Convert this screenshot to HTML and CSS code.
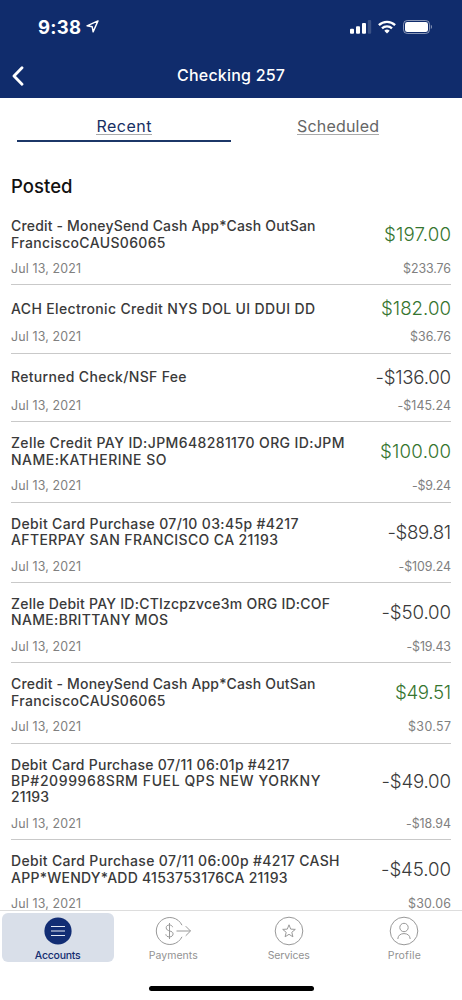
FILE: index.html
```html
<!DOCTYPE html>
<html lang="en">
<head>
<meta charset="utf-8">
<title>Checking 257</title>
<link rel="stylesheet" href="styles.css">
</head>
<body>
<div class="app">
  <header class="header">
    <div class="status">
      <div class="clock"><span data-w="43">9:38</span>
        <svg width="13" height="13" viewBox="0 0 13 13" fill="none" stroke="#fff" stroke-width="1.4" stroke-linejoin="round"><path d="M12 .9 1 5.800l5.200.9.900 5.200z"/></svg>
      </div>
      <div class="signals">
        <svg width="22" height="14" viewBox="0 0 22 14" fill="#fff"><rect x="0" y="8.800" width="4" height="5" rx="1"/><rect x="6" y="6.200" width="4" height="7.600" rx="1"/><rect x="12" y="3" width="4" height="10.800" rx="1"/><rect x="17.800" y="0" width="3.400" height="13.800" rx="1" opacity=".18"/></svg>
        <svg class="wifi" width="18" height="14" viewBox="0 0 18 14" fill="none" stroke="#fff" stroke-width="2.300"><path d="M.9 5.100a11.600 11.600 0 0 1 16.200 0M4 8.400a7.200 7.200 0 0 1 10 0"/><path d="m9 13.400-2.700-2.700a4 4 0 0 1 5.400 0z" fill="#fff" stroke="none"/></svg>
        <svg class="battery" width="29" height="14" viewBox="0 0 29 14"><rect x=".5" y=".5" width="26" height="13" rx="3.800" fill="none" stroke="#fff" stroke-opacity=".5"/><rect x="2" y="2" width="23" height="10" rx="2.300" fill="#fff"/><path d="M27.800 4.800q1.200.5 1.200 2.100t-1.200 2.200z" fill="#fff" opacity=".5"/></svg>
      </div>
    </div>
    <div class="navbar">
      <svg class="back" width="12" height="20" viewBox="0 0 12 20" fill="none" stroke="#fff" stroke-width="2.800" stroke-linecap="round" stroke-linejoin="round"><path d="M10 1.800 2 10l8 8.200"/></svg>
      <h1 class="title" data-w="108">Checking 257</h1>
    </div>
  </header>
  <nav class="tabs">
    <a class="tab active"><span data-w="55">Recent</span></a>
    <a class="tab"><span data-w="82">Scheduled</span></a>
  </nav>
  <main class="content">
    <h2 class="heading"><span data-w="61.500">Posted</span></h2>
    <ul class="list">
      <li class="row"><div class="main"><div class="desc"><span data-w="304.500">Credit - MoneySend Cash App*Cash OutSan</span><span data-w="154.500">FranciscoCAUS06065</span></div><span class="amount plus" data-w="67">$197.00</span></div><div class="meta"><span data-w="70">Jul 13, 2021</span><span data-w="48">$233.76</span></div></li>
      <li class="row"><div class="main"><div class="desc"><span data-w="304">ACH Electronic Credit NYS DOL UI DDUI DD</span></div><span class="amount plus" data-w="70">$182.00</span></div><div class="meta"><span data-w="70">Jul 13, 2021</span><span data-w="41">$36.76</span></div></li>
      <li class="row"><div class="main"><div class="desc"><span data-w="175.500">Returned Check/NSF Fee</span></div><span class="amount" data-w="75.500">-$136.00</span></div><div class="meta"><span data-w="70">Jul 13, 2021</span><span data-w="53.500">-$145.24</span></div></li>
      <li class="row"><div class="main"><div class="desc"><span data-w="333.500">Zelle Credit PAY ID:JPM648281170 ORG ID:JPM</span><span data-w="155.500">NAME:KATHERINE SO</span></div><span class="amount plus" data-w="71">$100.00</span></div><div class="meta"><span data-w="70">Jul 13, 2021</span><span data-w="39">-$9.24</span></div></li>
      <li class="row"><div class="main"><div class="desc"><span data-w="287.500">Debit Card Purchase 07/10 03:45p #4217</span><span data-w="267">AFTERPAY SAN FRANCISCO CA 21193</span></div><span class="amount" data-w="63.500">-$89.81</span></div><div class="meta"><span data-w="70">Jul 13, 2021</span><span data-w="52.500">-$109.24</span></div></li>
      <li class="row"><div class="main"><div class="desc"><span data-w="319">Zelle Debit PAY ID:CTIzcpzvce3m ORG ID:COF</span><span data-w="157">NAME:BRITTANY MOS</span></div><span class="amount" data-w="69.500">-$50.00</span></div><div class="meta"><span data-w="70">Jul 13, 2021</span><span data-w="44.500">-$19.43</span></div></li>
      <li class="row"><div class="main"><div class="desc"><span data-w="304.500">Credit - MoneySend Cash App*Cash OutSan</span><span data-w="154.500">FranciscoCAUS06065</span></div><span class="amount plus" data-w="56">$49.51</span></div><div class="meta"><span data-w="70">Jul 13, 2021</span><span data-w="43">$30.57</span></div></li>
      <li class="row"><div class="main"><div class="desc"><span data-w="278.500">Debit Card Purchase 07/11 06:01p #4217</span><span data-w="309.500">BP#2099968SRM FUEL QPS NEW YORKNY</span><span data-w="38">21193</span></div><span class="amount" data-w="69.500">-$49.00</span></div><div class="meta"><span data-w="70">Jul 13, 2021</span><span data-w="45">-$18.94</span></div></li>
      <li class="row"><div class="main"><div class="desc"><span data-w="328.500">Debit Card Purchase 07/11 06:00p #4217 CASH</span><span data-w="276.500">APP*WENDY*ADD 4153753176CA 21193</span></div><span class="amount" data-w="70">-$45.00</span></div><div class="meta"><span data-w="70">Jul 13, 2021</span><span data-w="43">$30.06</span></div></li>
    </ul>
  </main>
  <footer class="footer">
    <nav class="tabbar">
      <a class="item selected"><svg width="30" height="30" viewBox="0 0 30 30"><circle cx="15" cy="15" r="13.600" fill="#122d74"/><path d="M8 10.500h14M8 15h14M8 19.500h14" stroke="#e5eaf5" stroke-width="1"/></svg><span data-w="46">Accounts</span></a>
      <a class="item"><svg width="36" height="30" viewBox="0 0 36 30" fill="none" stroke="#999" stroke-width="1"><path d="M27 9.200A13.500 13.500 0 1 0 27 20.800M21.500 15h14M30.700 10.200l4.800 4.800-4.800 4.800"/><path d="M17.600 11.200c-.3-1.500-1.500-2.200-3.100-2.200-1.900 0-3.300.9-3.300 2.700 0 4.200 6.900 2.400 6.900 6.200 0 1.900-1.700 3-3.600 3-2.100 0-3.400-.9-3.700-2.600M14.500 7v16"/></svg><span data-w="49">Payments</span></a>
      <a class="item"><svg width="30" height="30" viewBox="0 0 30 30" fill="none" stroke="#999" stroke-width="1"><circle cx="15" cy="15" r="13.800"/><path d="m15 8.800 1.700 4.300 4.600.3-3.500 2.900 1.100 4.500-3.900-2.500-3.900 2.500 1.100-4.500-3.500-2.900 4.600-.3z"/></svg><span data-w="42">Services</span></a>
      <a class="item"><svg width="30" height="30" viewBox="0 0 30 30" fill="none" stroke="#999" stroke-width="1"><circle cx="15" cy="15" r="13.800"/><circle cx="15" cy="11.500" r="4.200"/><path d="M8.800 23c.2-3.600 2.700-5.400 6.200-5.400s6 1.800 6.200 5.400"/></svg><span data-w="33">Profile</span></a>
    </nav>
    <div class="home"></div>
  </footer>
</div>
<script src="spacing.js"></script>
</body>
</html>
```
FILE: styles.css
```css
* { box-sizing: border-box; }
body { margin: 0; background: #fff; font-family: Inter, "Liberation Sans", sans-serif; color: #3a3a3a; }
h1, h2, ul { margin: 0; padding: 0; font-weight: 400; }
[data-w] { white-space: nowrap; }
.app { width: 462px; height: 1000px; overflow: hidden; display: flex; flex-direction: column; }
.header { flex: none; height: 98px; background: #102c6c; color: #fff; }
.status { height: 53px; display: flex; justify-content: space-between; padding: 0 30px 0 38px; align-items: center; }
.clock { display: flex; align-items: center; gap: 5px; font-weight: 700; font-size: 18.500px; line-height: 20px; }
.signals { display: flex; align-items: center; }
.wifi { margin-left: 6px; }
.battery { margin-left: 7px; }
.navbar { height: 45px; display: grid; grid-template-columns: 60px 1fr 60px; align-items: center; justify-items: center; }
.back { justify-self: start; margin-left: 12px; }
.title { font-size: 16px; line-height: 20px; font-weight: 500; margin-top: -2px; }
.tabs { flex: none; height: 44px; display: flex; padding: 0 17px; }
.tab { flex: 1; text-align: center; padding-top: 18px; font-size: 16px; line-height: 20px; font-weight: 400; color: #666; border-bottom: 2px solid transparent; }
.tab span { display: inline-block; height: 19px; border-bottom: 1px solid #aaa; }
.tab.active { color: #172f63; border-bottom-color: #1c3768; }
.content { flex: 1; min-height: 0; overflow: hidden; padding: 0 11px; }
.heading { height: 63.100px; padding-top: 32px; font-size: 18.500px; line-height: 24px; color: #111; font-weight: 500; }
.list { list-style: none; }
.row { padding: 13px 0 8.500px; border-bottom: 1px solid #c9c9c9; }
.main { min-height: 21px; display: flex; align-items: center; justify-content: space-between; }
.desc { display: flex; flex-direction: column; align-items: flex-start; font-size: 14px; line-height: 16.400px; font-weight: 500; }
.amount { font-size: 18.700px; line-height: 21px; font-weight: 300; }
.plus { color: #36752f; }
.meta { display: flex; justify-content: space-between; margin-top: 11px; font-size: 12.400px; line-height: 14px; color: #808080; }
.footer { flex: none; height: 90px; border-top: 1px solid #ddd; display: flex; flex-direction: column; align-items: center; }
.tabbar { width: 100%; display: grid; grid-template-columns: repeat(4, 1fr); height: 52px; padding-top: 2px; }
.item { display: flex; flex-direction: column; align-items: center; height: 49px; padding-top: 3px; font-size: 10.500px; line-height: 13px; color: #929292; }
.item svg { flex: none; margin-bottom: 3px; }
.selected { background: #d9dfe9; color: #142d70; font-weight: 500; border-radius: 6px; margin: 0 2px; }
.home { width: 165px; height: 5px; margin-top: 23px; border-radius: 3px; background: #000; }
```
FILE: spacing.js
```js
document.querySelectorAll("[data-w]").forEach(function (el) {
  var range = document.createRange();
  range.selectNodeContents(el);
  var natural = range.getBoundingClientRect().width;
  var gap = (parseFloat(el.dataset.w) - natural) / (el.textContent.length - 1);
  el.style.letterSpacing = gap + "px";
  el.style.marginRight = -gap + "px";
});
```
